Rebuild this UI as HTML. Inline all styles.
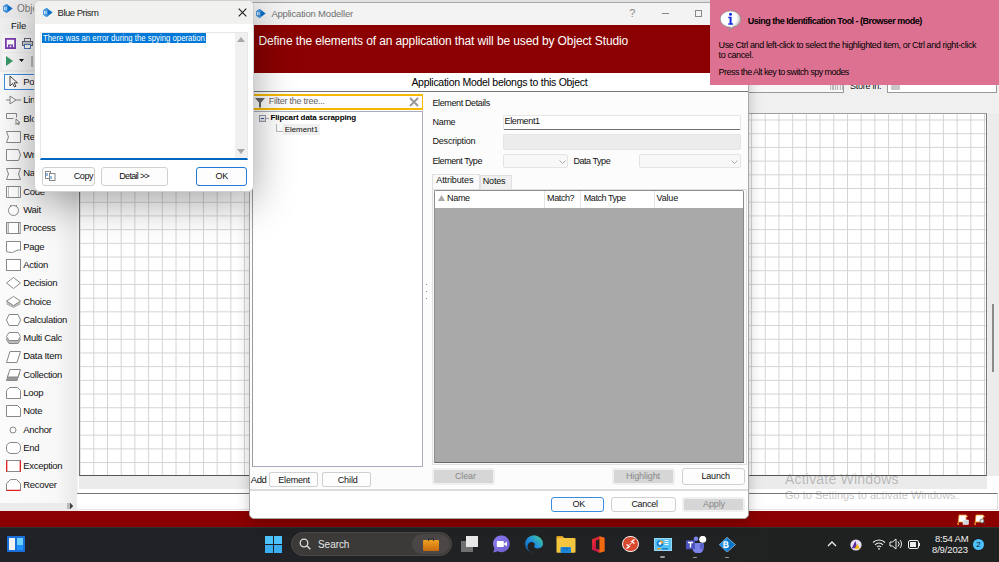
<!DOCTYPE html>
<html><head><meta charset="utf-8">
<style>
*{box-sizing:border-box;margin:0;padding:0}
html,body{width:999px;height:562px;overflow:hidden;background:#f0f0f0;font-family:"Liberation Sans",sans-serif;font-size:9px;color:#000}
.a{position:absolute;white-space:nowrap}
.grid{background-color:#fff;background-image:linear-gradient(to right,#d4d4d4 1.3px,transparent 1.3px),linear-gradient(to bottom,#d4d4d4 1.3px,transparent 1.3px);background-size:13.71px 13.71px;background-position:-0.4px 5.5px}
.sh{position:absolute;left:6px;width:15px;height:12px}
.btn{position:absolute;border:1px solid #d0d0d0;border-radius:2px;background:#fdfdfd}
</style></head><body>

<div class="a" style="left:0px;top:0px;width:999.00px;height:18.00px;background:#ececec"></div>
<div class="a" style="left:0px;top:18px;width:999.00px;height:16.00px;background:#f1f1f1"></div>
<svg class="a" style="left:3px;top:4px" width="10" height="9" viewBox="0 0 10 9"><path d="M.3 2.2L3.6 0l6.1 4.5-6.1 4.5L.3 6.8z" fill="#0b6fc9"/><path d="M.3 2.2L3.6 0l1 .7v7.6l-1 .7L.3 6.8z" fill="#4a9be2"/><path d="M1.5 3v3M3.1 3v3" stroke="#e4f1ff" stroke-width="0.9"/></svg>
<div class="a" style="left:17px;top:3.54px;font-size:10px;line-height:10px;color:#777;">Obje</div>
<div class="a" style="left:11px;top:21.46px;font-size:9.5px;line-height:9.5px;color:#111;">File</div>
<div class="a" style="left:2px;top:34px;width:31.00px;height:18.00px;background:#f8f8f8"></div>
<svg class="a" style="left:5px;top:38px" width="11" height="11" viewBox="0 0 11 11"><rect x="0.9" y="0.9" width="9.2" height="9.2" fill="#fff" stroke="#7b3fb0" stroke-width="1.8"/><rect x="3" y="6.5" width="5" height="3.6" fill="#7b3fb0"/><rect x="4.7" y="7.6" width="1.6" height="1.6" fill="#fff"/></svg>
<svg class="a" style="left:22px;top:38px" width="11" height="11" viewBox="0 0 11 11"><rect x="2.5" y="0.5" width="6" height="3" fill="none" stroke="#667"/><rect x="0.5" y="3.5" width="10" height="4" fill="#c8ccd4" stroke="#667"/><rect x="2.5" y="6.5" width="6" height="4" fill="#fff" stroke="#4a7ab8"/></svg>
<div class="a" style="left:2px;top:53px;width:31.00px;height:17.00px;background:#f8f8f8"></div>
<svg class="a" style="left:6px;top:56px" width="8" height="10" viewBox="0 0 8 10"><path d="M0 0l7 5-7 5z" fill="#3a9a6a"/></svg>
<svg class="a" style="left:19px;top:59px" width="5" height="4" viewBox="0 0 5 4"><path d="M0 0h5l-2.5 3z" fill="#111"/></svg>
<div class="a" style="left:31px;top:56px;width:2.00px;height:11.00px;background:#bbb"></div>
<div class="a" style="left:0px;top:72px;width:78.00px;height:439.00px;background:linear-gradient(to right,#fbfbfb 0,#f8f8f8 55px,#eaeaea 76px,#f4f4f4 78px)"></div>
<div class="a" style="left:4px;top:74px;width:36.00px;height:16.00px;border:1px solid #3c8ee0;background:#fff"></div>
<svg class="a" style="left:9px;top:75px" width="9" height="13" viewBox="0 0 9 13"><path d="M1 1v10l2.5-2.5 2 3.5 1.5-.8-2-3.4h3.5z" fill="#fff" stroke="#333" stroke-width=".9"/></svg>
<div class="a" style="left:23.3px;top:76.96px;font-size:9.5px;line-height:9.5px;color:#111;letter-spacing:-0.3px;">Po</div>
<svg class="a" style="left:6px;top:94.3px" width="15" height="12" viewBox="0 0 15 12"><path d="M0 6h4M10 6h5M4 2v8l6-4z" fill="none" stroke="#888"/></svg>
<div class="a" style="left:23.3px;top:95.26px;font-size:9.5px;line-height:9.5px;color:#111;letter-spacing:-0.3px;">Lin</div>
<svg class="a" style="left:6px;top:112.6px" width="15" height="12" viewBox="0 0 15 12"><path d="M.5 .5h10v4M.5 .5v5h7" fill="none" stroke="#888"/><path d="M10 6v5.5l1.3-1.3 1 2 .8-.4-1-2h2z" fill="#fff" stroke="#555" stroke-width=".7"/></svg>
<div class="a" style="left:23.3px;top:113.56px;font-size:9.5px;line-height:9.5px;color:#111;letter-spacing:-0.3px;">Blo</div>
<svg class="a" style="left:6px;top:130.9px" width="15" height="12" viewBox="0 0 15 12"><path d="M.5 .5h14v11H.5l2-5.5z" fill="#fff" stroke="#888"/></svg>
<div class="a" style="left:23.3px;top:131.86px;font-size:9.5px;line-height:9.5px;color:#111;letter-spacing:-0.3px;">Read</div>
<svg class="a" style="left:6px;top:149.2px" width="15" height="12" viewBox="0 0 15 12"><path d="M.5 .5h12l2 5.5-2 5.5H.5z" fill="#fff" stroke="#888"/></svg>
<div class="a" style="left:23.3px;top:150.16px;font-size:9.5px;line-height:9.5px;color:#111;letter-spacing:-0.3px;">Write</div>
<svg class="a" style="left:6px;top:167.5px" width="15" height="12" viewBox="0 0 15 12"><path d="M.5 .5h14l-2 5.5 2 5.5H.5l2-5.5z" fill="#fff" stroke="#888"/></svg>
<div class="a" style="left:23.3px;top:168.46px;font-size:9.5px;line-height:9.5px;color:#111;letter-spacing:-0.3px;">Navigate</div>
<svg class="a" style="left:6px;top:185.8px" width="15" height="12" viewBox="0 0 15 12"><path d="M.5 .5h14v11H.5z" fill="#fff" stroke="#888"/><path d="M2.5 .5v11M12.5 .5v11" stroke="#888" stroke-dasharray="1 1"/></svg>
<div class="a" style="left:23.3px;top:186.76px;font-size:9.5px;line-height:9.5px;color:#111;letter-spacing:-0.3px;">Code</div>
<svg class="a" style="left:6px;top:204.1px" width="15" height="12" viewBox="0 0 15 12"><circle cx="7.5" cy="6.5" r="5" fill="#fff" stroke="#888"/><path d="M4 1.2l1.5 1M11 1.2l-1.5 1" stroke="#888"/></svg>
<div class="a" style="left:23.3px;top:205.06px;font-size:9.5px;line-height:9.5px;color:#111;letter-spacing:-0.3px;">Wait</div>
<svg class="a" style="left:6px;top:222.4px" width="15" height="12" viewBox="0 0 15 12"><path d="M.5 .5h14v11H.5z M2.5 .5v11M12.5 .5v11" fill="#fff" stroke="#888"/><path d="M1 1h1.5v10H1zM13 1h1.5v10H13z" fill="#ddd"/></svg>
<div class="a" style="left:23.3px;top:223.36px;font-size:9.5px;line-height:9.5px;color:#111;letter-spacing:-0.3px;">Process</div>
<svg class="a" style="left:6px;top:240.7px" width="15" height="12" viewBox="0 0 15 12"><path d="M.5 .5h14v9c-3-2-6 2-9 2-2 0-3.5-.5-5-1z" fill="#fff" stroke="#888"/></svg>
<div class="a" style="left:23.3px;top:241.66px;font-size:9.5px;line-height:9.5px;color:#111;letter-spacing:-0.3px;">Page</div>
<svg class="a" style="left:6px;top:259.0px" width="15" height="12" viewBox="0 0 15 12"><rect x=".5" y=".5" width="14" height="11" fill="#fff" stroke="#888"/></svg>
<div class="a" style="left:23.3px;top:259.96px;font-size:9.5px;line-height:9.5px;color:#111;letter-spacing:-0.3px;">Action</div>
<svg class="a" style="left:6px;top:277.3px" width="15" height="12" viewBox="0 0 15 12"><path d="M7.5 .5l7 5.5-7 5.5L.5 6z" fill="#fff" stroke="#888"/></svg>
<div class="a" style="left:23.3px;top:278.26px;font-size:9.5px;line-height:9.5px;color:#111;letter-spacing:-0.3px;">Decision</div>
<svg class="a" style="left:6px;top:295.6px" width="15" height="12" viewBox="0 0 15 12"><path d="M.5 5.5l7 4 7-4M.5 6.7l7 4 7-4M.5 7.9l7 3.6 7-3.6" fill="none" stroke="#999" stroke-width=".8"/><path d="M7.5 .5l7 4.5-7 4.5-7-4.5z" fill="#fff" stroke="#888"/></svg>
<div class="a" style="left:23.3px;top:296.56px;font-size:9.5px;line-height:9.5px;color:#111;letter-spacing:-0.3px;">Choice</div>
<svg class="a" style="left:6px;top:313.9px" width="15" height="12" viewBox="0 0 15 12"><path d="M3 .5h9l2.5 5.5-2.5 5.5H3L.5 6z" fill="#fff" stroke="#888"/></svg>
<div class="a" style="left:23.3px;top:314.86px;font-size:9.5px;line-height:9.5px;color:#111;letter-spacing:-0.3px;">Calculation</div>
<svg class="a" style="left:6px;top:332.2px" width="15" height="12" viewBox="0 0 15 12"><path d="M3 3h9l2.5 4.5-2.5 4H3l-2.5-4z" fill="#bbb" stroke="#888"/><path d="M3 .5h9l2.5 4-2.5 4H3l-2.5-4z" fill="#fff" stroke="#888"/></svg>
<div class="a" style="left:23.3px;top:333.16px;font-size:9.5px;line-height:9.5px;color:#111;letter-spacing:-0.3px;">Multi Calc</div>
<svg class="a" style="left:6px;top:350.5px" width="15" height="12" viewBox="0 0 15 12"><path d="M4 .5h10.5l-3.5 11H.5z" fill="#fff" stroke="#888"/></svg>
<div class="a" style="left:23.3px;top:351.46px;font-size:9.5px;line-height:9.5px;color:#111;letter-spacing:-0.3px;">Data Item</div>
<svg class="a" style="left:6px;top:368.8px" width="15" height="12" viewBox="0 0 15 12"><path d="M3 4h10.5L11 11.5H.5z" fill="#999" stroke="#888"/><path d="M4 .5h10.5L12 8H1.5z" fill="#fff" stroke="#888"/></svg>
<div class="a" style="left:23.3px;top:369.76px;font-size:9.5px;line-height:9.5px;color:#111;letter-spacing:-0.3px;">Collection</div>
<svg class="a" style="left:6px;top:387.1px" width="15" height="12" viewBox="0 0 15 12"><path d="M.5 11.5v-8l3-3h8l3 3v8z" fill="#fff" stroke="#888"/></svg>
<div class="a" style="left:23.3px;top:388.06px;font-size:9.5px;line-height:9.5px;color:#111;letter-spacing:-0.3px;">Loop</div>
<svg class="a" style="left:6px;top:405.4px" width="15" height="12" viewBox="0 0 15 12"><path d="M.5 .5h11l3 3v8H.5z" fill="#fff" stroke="#888"/></svg>
<div class="a" style="left:23.3px;top:406.36px;font-size:9.5px;line-height:9.5px;color:#111;letter-spacing:-0.3px;">Note</div>
<svg class="a" style="left:6px;top:423.7px" width="15" height="12" viewBox="0 0 15 12"><circle cx="7" cy="6" r="3" fill="#fff" stroke="#888"/></svg>
<div class="a" style="left:23.3px;top:424.66px;font-size:9.5px;line-height:9.5px;color:#111;letter-spacing:-0.3px;">Anchor</div>
<svg class="a" style="left:6px;top:442.0px" width="15" height="12" viewBox="0 0 15 12"><rect x=".5" y=".5" width="14" height="11" rx="4.5" fill="#fff" stroke="#888"/></svg>
<div class="a" style="left:23.3px;top:442.96px;font-size:9.5px;line-height:9.5px;color:#111;letter-spacing:-0.3px;">End</div>
<svg class="a" style="left:6px;top:460.3px" width="15" height="12" viewBox="0 0 15 12"><rect x=".5" y=".5" width="14" height="11" fill="#fff" stroke="#888"/><path d="M.7 .5v11M14.3 .5v11" stroke="#e02020" stroke-width="1.3"/></svg>
<div class="a" style="left:23.3px;top:461.26px;font-size:9.5px;line-height:9.5px;color:#111;letter-spacing:-0.3px;">Exception</div>
<svg class="a" style="left:6px;top:478.6px" width="15" height="12" viewBox="0 0 15 12"><path d="M.5 11.5v-7l4-4h6l4 4v7z" fill="#fff" stroke="#888"/><path d="M.5 11.4h14" stroke="#e02020" stroke-width="1.3"/></svg>
<div class="a" style="left:23.3px;top:479.56px;font-size:9.5px;line-height:9.5px;color:#111;letter-spacing:-0.3px;">Recover</div>
<div class="a" style="left:0px;top:503px;width:78.00px;height:8.00px;background:#ebebeb"></div>
<svg class="a" style="left:67px;top:503px" width="8" height="6" viewBox="0 0 8 6"><path d="M1 0v6M3 0l3 3-3 3z" fill="#444" stroke="#444" stroke-width=".6"/></svg>
<div class="a grid" style="left:79px;top:113px;width:908px;height:363px;border:1px solid #777;border-top-color:#a0a0a0;border-bottom-color:#555"></div>
<div class="a" style="left:78px;top:476px;width:921.00px;height:35.00px;background:#fff"></div>
<div class="a" style="left:79px;top:476px;width:908.00px;height:13.00px;background:#ebebeb"></div>
<div class="a" style="left:988px;top:113px;width:11.00px;height:363.00px;background:#ececec"></div>
<div class="a" style="left:992px;top:304px;width:2.00px;height:68.00px;background:#8a8a8a"></div>
<div class="a" style="left:77px;top:492.5px;width:921.00px;height:17.00px;background:#fff;border-top:1px solid #777;border-right:1px solid #ddd;border-bottom:1px solid #e4e4e4"></div>
<div class="a" style="left:748px;top:76px;width:96.00px;height:17.00px;background:#f7f7f7;border:1px solid #999"></div>
<div class="a" style="left:850px;top:82.38px;font-size:9px;line-height:9px;color:#111;letter-spacing:-0.25px;">Store in:</div>
<div class="a" style="left:887px;top:76px;width:110.00px;height:17.00px;background:#fff;border:1px solid #999"></div>
<div class="a" style="left:891px;top:84.5px;width:9.00px;height:5.50px;background:#c8c8c8;border-radius:1px"></div>
<div class="a" style="left:830px;top:84.5px;width:13.00px;height:5.50px;background:repeating-linear-gradient(to right,#bbb 0 1.2px,#eee 1.2px 2.4px)"></div>
<div class="a" style="left:785px;top:471.75px;font-size:14px;line-height:14px;color:rgba(120,120,120,.45);letter-spacing:0.2px;">Activate Windows</div>
<div class="a" style="left:785px;top:489.69px;font-size:11px;line-height:11px;color:rgba(120,120,120,.45);">Go to Settings to activate Windows.</div>
<div class="a" style="left:0px;top:511px;width:999.00px;height:16.00px;background:#8b0000"></div>
<svg class="a" style="left:957px;top:514px" width="12" height="11" viewBox="0 0 12 11"><path d="M2 1h7l1.5 1.5L9 3v5H2l-1.5 1.5L2 11H1z" fill="#fff" stroke="#f39a2a" stroke-width=".8"/><rect x="6" y="6" width="5.5" height="4.5" fill="#cfd8dc" stroke="#fff" stroke-width=".5"/></svg>
<svg class="a" style="left:974px;top:514px" width="12" height="11" viewBox="0 0 12 11"><path d="M2 1h7l1.5 1.5L9 3v5H2l-1.5 1.5L2 11H1z" fill="#fff" stroke="#f39a2a" stroke-width=".8"/><circle cx="8" cy="7" r="2" fill="#dfe8ec" stroke="#555" stroke-width=".7"/><path d="M9.4 8.4l1.8 1.8" stroke="#555"/></svg>
<div class="a" style="left:0px;top:527px;width:999.00px;height:35.00px;background:linear-gradient(to right,#202227,#212224 50%,#1f2120)"></div>
<div class="a" style="left:0px;top:527px;width:999.00px;height:1.00px;background:#2c3434"></div>
<div class="a" style="left:7px;top:536px;width:18.00px;height:16.00px;background:#1a6fd8;border-radius:1px"></div>
<div class="a" style="left:9px;top:538px;width:6.00px;height:12.00px;background:#f2f2f2"></div>
<div class="a" style="left:17px;top:538px;width:6.00px;height:12.00px;background:linear-gradient(#6cd0ff 60%,#1e90ff 60%)"></div>
<div class="a" style="left:265px;top:536px;width:8.00px;height:8.00px;background:#4cc2ff"></div>
<div class="a" style="left:274px;top:536px;width:8.00px;height:8.00px;background:#4cc2ff"></div>
<div class="a" style="left:265px;top:545px;width:8.00px;height:8.00px;background:#3aaef0"></div>
<div class="a" style="left:274px;top:545px;width:8.00px;height:8.00px;background:#3aaef0"></div>
<div class="a" style="left:291px;top:532px;width:161.00px;height:24.00px;border-radius:12px;background:#3b3a39;border:1px solid #4a4948"></div>
<svg class="a" style="left:299px;top:538px" width="12" height="12" viewBox="0 0 12 12"><circle cx="5" cy="5" r="3.8" fill="none" stroke="#ddd" stroke-width="1.3"/><path d="M7.8 7.8l3.5 3.5" stroke="#ddd" stroke-width="1.4"/></svg>
<div class="a" style="left:318px;top:539.83px;font-size:10px;line-height:10px;color:#e6e6e6;letter-spacing:-0.05px;">Search</div>
<div class="a" style="left:412px;top:534px;width:38.00px;height:20.00px;border-radius:10px;background:#4a4746"></div>
<div class="a" style="left:423px;top:540px;width:16.00px;height:11.00px;background:linear-gradient(#f0a020,#c86a10);border-radius:1px"></div>
<div class="a" style="left:428px;top:538px;width:6.00px;height:3.00px;border:1px solid #333;border-bottom:none"></div>
<div class="a" style="left:461px;top:541px;width:12.00px;height:11.00px;background:#707070"></div>
<div class="a" style="left:466px;top:536px;width:12.00px;height:11.00px;background:#e8e8e8"></div>
<svg class="a" style="left:492px;top:535px" width="19" height="18" viewBox="0 0 19 18"><defs><linearGradient id="mg" x1="0" y1="0" x2="1" y2="1"><stop offset="0" stop-color="#8c7cf0"/><stop offset="1" stop-color="#6c5ccc"/></linearGradient></defs><path d="M9.5 .5a8.3 8.3 0 1 1-3.6 15.8L1.2 17.5l1.3-4A8.3 8.3 0 0 1 9.5 .5z" fill="url(#mg)"/><rect x="4.8" y="6" width="7" height="6" rx=".8" fill="#fff"/><path d="M11.5 9l3.3-2.6v5.2z" fill="#fff"/></svg>
<svg class="a" style="left:524px;top:535px" width="20" height="18" viewBox="0 0 20 18"><defs><linearGradient id="eg1" x1="0" y1="1" x2="1" y2="0"><stop offset="0" stop-color="#0c59a4"/><stop offset=".5" stop-color="#1e8fe0"/><stop offset="1" stop-color="#4ad28a"/></linearGradient></defs><path d="M10 .3a9 9 0 0 1 9 8.7c0 2.8-2.6 4.4-5.4 4.4-2 0-3.6-.8-3.6-1.6 0-.5.8-.7.8-2a3 3 0 0 0-3-2.8C5 7 3 9.5 3.6 12.8 4.4 16.5 8 18 10.8 17.6A9 9 0 0 1 1 9 9 9 0 0 1 10 .3z" fill="url(#eg1)"/></svg>
<svg class="a" style="left:556px;top:536px" width="20" height="17" viewBox="0 0 20 17"><path d="M.5 1.2Q.5 .2 1.5 .2h5l1.6 1.8h10.4q1 0 1 1V16q0 .8-.8.8H1.3q-.8 0-.8-.8z" fill="#f4c53e"/><path d="M.5 1.2Q.5 .2 1.5 .2h5l1.6 1.8H.5z" fill="#e0a020"/><rect x="4.5" y="11" width="10.5" height="6" rx="1" fill="#1a84d8"/><rect x="7" y="12.4" width="5.5" height=".9" fill="#0d5ea8"/></svg>
<svg class="a" style="left:590.5px;top:535.5px" width="14" height="17" viewBox="0 0 14 17"><defs><linearGradient id="og" x1="0" y1="0" x2="1" y2="1"><stop offset="0" stop-color="#e8352a"/><stop offset=".6" stop-color="#c0124a"/><stop offset="1" stop-color="#f06010"/></linearGradient></defs><path d="M1 3.2L8.5 .3 13.5 1.8v13.4L8.5 16.7 1 13.8z" fill="url(#og)"/><path d="M5 4.5l3.8-1.3v10.6L5 12.5z" fill="#202020"/><path d="M8.5 .3l5 1.5v13.4l-5 1.5z" fill="#f06a10"/></svg>
<div class="a" style="left:622px;top:535.7px;width:16.6px;height:16.6px;border-radius:50%;background:#d9492f;border:1.3px solid #f2f2f2"></div>
<svg class="a" style="left:625px;top:539px" width="11" height="10" viewBox="0 0 11 10"><path d="M1.5 5.5l2.8 2-2.8 2M9.5 .5l-2.8 2 2.8 2" fill="none" stroke="#fff" stroke-width="1.4"/><path d="M4.2 6.3l2.6-2.6" stroke="#fff" stroke-width="1"/></svg>
<div class="a" style="left:653.5px;top:537.5px;width:18.00px;height:13.50px;background:#55c4f5;border:1px solid #9ad8f8"></div>
<svg class="a" style="left:656px;top:539px" width="14" height="11" viewBox="0 0 14 11"><circle cx="4" cy="4.5" r="3.3" fill="#1a7fd0"/><path d="M4 4.5V1.2A3.3 3.3 0 0 1 7.3 4.5z" fill="#f0a030"/><circle cx="4" cy="4.5" r="1.4" fill="#fff"/><path d="M8.5 1.5h4M8.5 3.5h4M8.5 5.5h4" stroke="#fff" stroke-width=".9"/><rect x="1" y="9" width="4" height="1.5" fill="#f0a030"/><rect x="6" y="9" width="6" height="1.5" fill="#1a7fd0"/></svg>
<div class="a" style="left:659.8px;top:556.2px;width:5.40px;height:1.60px;background:#9a9a9a;border-radius:1px"></div>
<svg class="a" style="left:685px;top:535.5px" width="22" height="17" viewBox="0 0 22 17"><circle cx="11" cy="2.8" r="2.3" fill="#7b83eb"/><path d="M5.5 7h12a1 1 0 0 1 1 1v4.5a5.5 5 0 0 1-11 0V8z" fill="#7b83eb"/><path d="M15 7.5h4v4a2 2 0 0 1-4 0z" fill="#5a62c8"/><rect x=".9" y="4.2" width="9.1" height="9.1" rx=".8" fill="#4b53bc"/><path d="M3 6.5h5M5.5 6.5v5" stroke="#fff" stroke-width="1.4"/><circle cx="17.7" cy="3.3" r="3.5" fill="#fff"/></svg>
<div class="a" style="left:692.5px;top:556.5px;width:4.50px;height:1.50px;background:#9a9a9a;border-radius:1px"></div>
<svg class="a" style="left:718.5px;top:536.5px" width="17" height="15.5" viewBox="0 0 17 15.5"><path d="M8 .3l8.5 7.4L8 15.2 .3 7.7z" fill="#0b76c8" stroke="#e8eef4" stroke-width=".5"/><path d="M4.2 4L8 .3v14.9L.3 7.7z" fill="#2a92e0"/><path d="M4.5 4.3h3.2q1.8 0 1.8 1.6 0 1-.9 1.4 1.3.3 1.3 1.7 0 1.9-2.2 1.9H4.5z" fill="#fff"/><path d="M5.8 5.4h1.6q.8 0 .8.7t-.8.7H5.8zM5.8 7.8h1.8q.9 0 .9.8t-.9.8H5.8z" fill="#2a92e0"/></svg>
<div class="a" style="left:724.8px;top:556.5px;width:4.50px;height:1.50px;background:#9a9a9a;border-radius:1px"></div>
<svg class="a" style="left:827px;top:541px" width="10" height="6" viewBox="0 0 10 6"><path d="M1 5l4-4 4 4" fill="none" stroke="#eee" stroke-width="1.3"/></svg>
<svg class="a" style="left:849.5px;top:538.5px" width="12" height="12" viewBox="0 0 12 12"><circle cx="6" cy="6" r="5.6" fill="#e8e0f0"/><path d="M5.5 1.8L1.8 9.2h5.4z" fill="#5a2ca0"/><path d="M7.3 5.2l-2.8 4.6h5.6z" fill="#f4b400"/></svg>
<svg class="a" style="left:872px;top:538px" width="14" height="12" viewBox="0 0 14 12"><path d="M1 4.5a8.5 8.5 0 0 1 12 0M3 6.8a5.5 5.5 0 0 1 8 0M5 9a2.5 2.5 0 0 1 4 0" fill="none" stroke="#eee" stroke-width="1.1"/><circle cx="7" cy="10.8" r=".9" fill="#eee"/></svg>
<svg class="a" style="left:889px;top:538px" width="14" height="12" viewBox="0 0 14 12"><path d="M1 4h2.5L7 1v10L3.5 8H1z" fill="none" stroke="#eee" stroke-width="1"/><path d="M9 3.5a3.5 3.5 0 0 1 0 5M11 2a6 6 0 0 1 0 8" fill="none" stroke="#eee" stroke-width="1"/></svg>
<svg class="a" style="left:908px;top:539.5px" width="12" height="9" viewBox="0 0 12 9"><rect x=".5" y=".5" width="10" height="8" rx="1.5" fill="none" stroke="#eee"/><rect x="2" y="2" width="6" height="5" fill="#eee"/><rect x="10.8" y="3" width="1.2" height="3" fill="#eee"/></svg>
<div class="a" style="left:935px;top:533.96px;font-size:9.5px;line-height:9.5px;color:#f0f0f0;letter-spacing:-0.2px;">8:54 AM</div>
<div class="a" style="left:932px;top:544.96px;font-size:9.5px;line-height:9.5px;color:#f0f0f0;letter-spacing:-0.15px;">8/9/2023</div>
<div class="a" style="left:973px;top:539px;width:11px;height:11px;border-radius:50%;background:#4cc2ff;color:#111;font-size:8px;line-height:11px;text-align:center">2</div>
<div class="a" style="left:249px;top:2px;width:500px;height:517px;background:#fcfcfc;border:1px solid #a8a8a8;border-radius:0 0 5px 5px;box-shadow:0 4px 14px rgba(0,0,0,.22)"></div>
<div class="a" style="left:250px;top:3px;width:498.00px;height:21.50px;background:#f3f3f3"></div>
<svg class="a" style="left:256px;top:9px" width="10" height="9" viewBox="0 0 10 9"><path d="M.3 2.2L3.6 0l6.1 4.5-6.1 4.5L.3 6.8z" fill="#0b6fc9"/><path d="M.3 2.2L3.6 0l1 .7v7.6l-1 .7L.3 6.8z" fill="#4a9be2"/><path d="M1.5 3v3M3.1 3v3" stroke="#e4f1ff" stroke-width="0.9"/></svg>
<div class="a" style="left:271.4px;top:9.26px;font-size:9.5px;line-height:9.5px;color:#707070;letter-spacing:-0.2px;">Application Modeller</div>
<div class="a" style="left:629.3px;top:8.29px;font-size:11px;line-height:11px;color:#888;">?</div>
<div class="a" style="left:662px;top:13px;width:7.00px;height:1.00px;background:#888"></div>
<div class="a" style="left:695px;top:9.7px;width:7.00px;height:7.00px;border:1px solid #888"></div>
<div class="a" style="left:254px;top:24.5px;width:494.00px;height:48.80px;background:#8b0000"></div>
<div class="a" style="left:258.5px;top:34.64px;font-size:12px;line-height:12px;color:#fff;letter-spacing:-0.12px;">Define the elements of an application that will be used by Object Studio</div>
<div class="a" style="left:254px;top:73.3px;width:494.00px;height:17.70px;background:#fff"></div>
<div class="a" style="left:254px;top:91px;width:494.00px;height:1.00px;background:#777"></div>
<div class="a" style="left:411.4px;top:77.41px;font-size:10.5px;line-height:10.5px;color:#000;letter-spacing:-0.27px;">Application Model belongs to this Object</div>
<div class="a" style="left:254px;top:94px;width:169.00px;height:16.00px;background:#fdfdfd;border-top:2px solid #f5b800;border-bottom:2px solid #f5b800;border-right:1.5px solid #f5b800"></div>
<svg class="a" style="left:255px;top:97.5px" width="10" height="10" viewBox="0 0 10 10"><path d="M0 0h10L6 4.5V9.5H4V4.5z" fill="#666"/></svg>
<div class="a" style="left:268.8px;top:97.08px;font-size:9px;line-height:9px;color:#666;letter-spacing:-0.25px;">Filter the tree...</div>
<svg class="a" style="left:409px;top:97px" width="10" height="10" viewBox="0 0 10 10"><path d="M1 1l8 8M9 1l-8 8" stroke="#999" stroke-width="2"/></svg>
<div class="a" style="left:251.5px;top:110.5px;width:171.50px;height:356.00px;background:#fff;border:1px solid #a8aec0;border-left:1.5px solid #9a9a9a"></div>
<div class="a" style="left:259px;top:115px;width:7.00px;height:7.00px;border:1px solid #99a;background:linear-gradient(#fff,#ddd)"></div>
<div class="a" style="left:261px;top:118px;width:3.00px;height:1.00px;background:#3355aa"></div>
<div class="a" style="left:266px;top:118px;width:3.00px;height:1.00px;background:#aaa"></div>
<div class="a" style="left:270.4px;top:113.93px;font-size:8px;line-height:8px;color:#000;font-weight:bold;letter-spacing:-0.1px;">Flipcart data scrapping</div>
<div class="a" style="left:276px;top:124px;width:1.00px;height:7.00px;background:#bbb"></div>
<div class="a" style="left:276px;top:131px;width:7.00px;height:1.00px;background:#bbb"></div>
<div class="a" style="left:283px;top:124px;width:37.00px;height:11.00px;background:#f0f0f0"></div>
<div class="a" style="left:284.7px;top:125.63px;font-size:8px;line-height:8px;color:#111;letter-spacing:-0.05px;">Element1</div>
<div class="a" style="left:250.8px;top:475.46px;font-size:9.5px;line-height:9.5px;color:#111;letter-spacing:-0.4px;">Add</div>
<div class="a" style="left:268.5px;top:472.4px;width:49.10px;height:15.00px;border:1px solid #d0d0d0;border-radius:2px;background:#fdfdfd"></div>
<div class="a" style="left:278.3px;top:475.58px;font-size:9px;line-height:9px;color:#111;letter-spacing:-0.2px;">Element</div>
<div class="a" style="left:322px;top:472.4px;width:49.00px;height:15.00px;border:1px solid #d0d0d0;border-radius:2px;background:#fdfdfd"></div>
<div class="a" style="left:337.7px;top:475.58px;font-size:9px;line-height:9px;color:#111;letter-spacing:-0.1px;">Child</div>
<div class="a" style="left:426px;top:284px;width:1.00px;height:1.00px;background:#888;box-shadow:0 7px #888,0 14px #888"></div>
<div class="a" style="left:432.5px;top:98.98px;font-size:9px;line-height:9px;color:#111;letter-spacing:-0.38px;">Element Details</div>
<div class="a" style="left:432.5px;top:117.58px;font-size:9px;line-height:9px;color:#111;letter-spacing:-0.3px;">Name</div>
<div class="a" style="left:502.7px;top:114.6px;width:238.30px;height:15.40px;background:#fff;border:1px solid #e6e6e6;border-bottom:1.5px solid #707070;border-radius:2px"></div>
<div class="a" style="left:504.5px;top:117.08px;font-size:9px;line-height:9px;color:#111;letter-spacing:-0.35px;">Element1</div>
<div class="a" style="left:432.5px;top:137.48px;font-size:9px;line-height:9px;color:#111;letter-spacing:-0.2px;">Description</div>
<div class="a" style="left:502.7px;top:134.2px;width:238.30px;height:15.50px;background:#ececec;border:1px solid #e4e4e4;border-radius:2px"></div>
<div class="a" style="left:432.5px;top:157.08px;font-size:9px;line-height:9px;color:#111;letter-spacing:-0.45px;">Element Type</div>
<div class="a" style="left:502.7px;top:153.9px;width:65.60px;height:14.60px;background:#f8f8f8;border:1px solid #e4e4e4;border-radius:2px"></div>
<svg class="a" style="left:559px;top:160px" width="7" height="4" viewBox="0 0 7 4"><path d="M.5 .5l3 3 3-3" fill="none" stroke="#aaa"/></svg>
<div class="a" style="left:573.4px;top:157.18px;font-size:9px;line-height:9px;color:#111;letter-spacing:-0.45px;">Data Type</div>
<div class="a" style="left:639.3px;top:153.9px;width:101.70px;height:14.60px;background:#f8f8f8;border:1px solid #e4e4e4;border-radius:2px"></div>
<svg class="a" style="left:731px;top:160px" width="7" height="4" viewBox="0 0 7 4"><path d="M.5 .5l3 3 3-3" fill="none" stroke="#aaa"/></svg>
<div class="a" style="left:479.5px;top:175.4px;width:32.50px;height:14.60px;background:#f0f0f0;border:1px solid #e0e0e0;border-bottom:none"></div>
<div class="a" style="left:431.5px;top:173.6px;width:48.00px;height:16.40px;background:#fafafa;border:1px solid #e0e0e0;border-bottom:none"></div>
<div class="a" style="left:436.3px;top:176.08px;font-size:9px;line-height:9px;color:#111;letter-spacing:-0.1px;">Attributes</div>
<div class="a" style="left:482.7px;top:177.38px;font-size:9px;line-height:9px;color:#111;letter-spacing:-0.15px;">Notes</div>
<div class="a" style="left:431.5px;top:189px;width:315.50px;height:275.50px;background:#fafafa;border:1px solid #e0e0e0"></div>
<div class="a" style="left:433.5px;top:189.5px;width:310.50px;height:273.00px;background:#a9a9a9;border:1.5px solid #8e8e8e;border-right:1px solid #8a8a8a;border-bottom-color:#6a6a6a;border-radius:2px 2px 0 0"></div>
<div class="a" style="left:435px;top:191px;width:308.00px;height:17.00px;background:#fff"></div>
<svg class="a" style="left:438px;top:195.2px" width="7" height="6" viewBox="0 0 7 6"><path d="M0 6l3.5-6 3.5 6z" fill="#a8a8a8"/></svg>
<div class="a" style="left:447px;top:193.88px;font-size:9px;line-height:9px;color:#111;letter-spacing:-0.3px;">Name</div>
<div class="a" style="left:543.5px;top:191px;width:1.00px;height:17.00px;background:#e4e4e4"></div>
<div class="a" style="left:547.1px;top:193.88px;font-size:9px;line-height:9px;color:#111;letter-spacing:-0.4px;">Match?</div>
<div class="a" style="left:580.3px;top:191px;width:1.00px;height:17.00px;background:#e4e4e4"></div>
<div class="a" style="left:583.8px;top:193.88px;font-size:9px;line-height:9px;color:#111;letter-spacing:-0.45px;">Match Type</div>
<div class="a" style="left:653.6px;top:191px;width:1.00px;height:17.00px;background:#e4e4e4"></div>
<div class="a" style="left:656.6px;top:193.88px;font-size:9px;line-height:9px;color:#111;letter-spacing:-0.2px;">Value</div>
<div class="a" style="left:431.7px;top:467.8px;width:63.50px;height:17.50px;background:#d6d6d6;border:2px solid #f0f0f0;border-radius:3px"></div>
<div class="a" style="left:454.9px;top:472.18px;font-size:9px;line-height:9px;color:#888;letter-spacing:-0.1px;">Clear</div>
<div class="a" style="left:611.6px;top:467.8px;width:63.90px;height:17.50px;background:#d6d6d6;border:2px solid #f0f0f0;border-radius:3px"></div>
<div class="a" style="left:625.9px;top:472.28px;font-size:9px;line-height:9px;color:#888;letter-spacing:-0.1px;">Highlight</div>
<div class="a" style="left:681.6px;top:467.8px;width:63.90px;height:17.50px;background:#fdfdfd;border:1px solid #d0d0d0;border-radius:3px"></div>
<div class="a" style="left:701.5px;top:472.28px;font-size:9px;line-height:9px;color:#111;letter-spacing:-0.2px;">Launch</div>
<div class="a" style="left:250px;top:489px;width:498.00px;height:2.00px;background:#dcdcdc"></div>
<div class="a" style="left:250px;top:491px;width:498.00px;height:27.00px;background:#fff;border-radius:0 0 5px 5px"></div>
<div class="a" style="left:550.6px;top:496.8px;width:53.30px;height:15.00px;background:#fdfdfd;border:1px solid #3a8ee0;border-radius:3px"></div>
<div class="a" style="left:572.4px;top:499.88px;font-size:9px;line-height:9px;color:#111;letter-spacing:-0.1px;">OK</div>
<div class="a" style="left:611px;top:496.8px;width:64.50px;height:15.00px;background:#fdfdfd;border:1px solid #d0d0d0;border-radius:3px"></div>
<div class="a" style="left:631.4px;top:499.88px;font-size:9px;line-height:9px;color:#111;letter-spacing:-0.3px;">Cancel</div>
<div class="a" style="left:681.6px;top:496.8px;width:63.90px;height:15.00px;background:#d6d6d6;border:2px solid #f0f0f0;border-radius:3px"></div>
<div class="a" style="left:703px;top:499.88px;font-size:9px;line-height:9px;color:#888;letter-spacing:-0.1px;">Apply</div>
<div class="a" style="left:34px;top:0;width:220px;height:191.5px;background:#fff;border:1px solid #d0d0d0;border-radius:6px;overflow:hidden;box-shadow:0 10px 40px rgba(0,0,0,.36)"></div>
<div class="a" style="left:35px;top:1px;width:218.00px;height:23.00px;background:#f1f1ef;border-radius:5px 5px 0 0"></div>
<svg class="a" style="left:42.8px;top:7.7px" width="10" height="9" viewBox="0 0 10 9"><path d="M.3 2.2L3.6 0l6.1 4.5-6.1 4.5L.3 6.8z" fill="#0b6fc9"/><path d="M.3 2.2L3.6 0l1 .7v7.6l-1 .7L.3 6.8z" fill="#4a9be2"/><path d="M1.5 3v3M3.1 3v3" stroke="#e4f1ff" stroke-width="0.9"/></svg>
<div class="a" style="left:57.6px;top:7.96px;font-size:9.5px;line-height:9.5px;color:#222;letter-spacing:-0.5px;">Blue Prism</div>
<svg class="a" style="left:238px;top:7.5px" width="9" height="9" viewBox="0 0 9 9"><path d="M.7 .7l7.6 7.6M8.3 .7L.7 8.3" stroke="#222" stroke-width="1.15"/></svg>
<div class="a" style="left:40px;top:31.5px;width:207.60px;height:128.00px;background:#fff;border:1px solid #e8e8e8;border-bottom:2px solid #0067c0"></div>
<div class="a" style="left:235px;top:32.5px;width:11.60px;height:125.00px;background:#f0f0f0"></div>
<svg class="a" style="left:237px;top:36px" width="8" height="6" viewBox="0 0 8 6"><path d="M0 6l4-5 4 5z" fill="#a8a8a8"/></svg>
<svg class="a" style="left:237px;top:149px" width="8" height="6" viewBox="0 0 8 6"><path d="M0 0l4 5 4-5z" fill="#a8a8a8"/></svg>
<div class="a" style="left:42.2px;top:33px;width:163.60px;height:9.80px;background:#0078d7"></div>
<div class="a" style="left:43.4px;top:33.2px;color:#fff;font-size:9.5px;line-height:9.5px;transform:scaleX(0.82);transform-origin:0 0">There was an error during the spying operation.</div>
<div class="a" style="left:42px;top:167.3px;width:52.50px;height:18.40px;border:1px solid #d0d0d0;border-radius:3px;background:#fdfdfd"></div>
<svg class="a" style="left:45px;top:171px" width="11" height="10" viewBox="0 0 11 10"><rect x=".5" y=".5" width="5" height="7" fill="#fff" stroke="#888"/><rect x="4.5" y="2.5" width="5.5" height="7" fill="#fff" stroke="#888"/><path d="M2 2v3M6 5v3" stroke="#2a7ad0"/></svg>
<div class="a" style="left:73.7px;top:172.28px;font-size:9px;line-height:9px;color:#111;letter-spacing:-0.4px;">Copy</div>
<div class="a" style="left:101.4px;top:167.3px;width:66.60px;height:18.40px;border:1px solid #d0d0d0;border-radius:3px;background:#fdfdfd"></div>
<div class="a" style="left:119.3px;top:172.28px;font-size:9px;line-height:9px;color:#111;letter-spacing:-0.7px;">Detail &gt;&gt;</div>
<div class="a" style="left:196.2px;top:167.3px;width:50.80px;height:18.40px;border:1px solid #1f7ad8;border-radius:3px;background:#fdfdfd"></div>
<div class="a" style="left:215.4px;top:172.28px;font-size:9px;line-height:9px;color:#111;letter-spacing:-0.2px;">OK</div>
<div class="a" style="left:710px;top:0px;width:289.00px;height:84.50px;background:#dd7191"></div>
<svg class="a" style="left:719px;top:9.5px" width="23" height="21" viewBox="0 0 23 21"><defs><radialGradient id="ig" cx=".4" cy=".35" r=".7"><stop offset=".55" stop-color="#fff"/><stop offset="1" stop-color="#9a9a9a"/></radialGradient></defs><path d="M11.5 .8a10.5 8.3 0 1 0 .3 16.6l-2.2 3.4 4.6-3.7A10.5 8.3 0 0 0 11.5 .8z" fill="url(#ig)" stroke="#8a8a8a" stroke-width=".8"/><circle cx="11.5" cy="4.3" r="1.5" fill="#1428e0"/><path d="M9.3 6.8h3.3v6.5h1.4v1.4H9.3v-1.4h1.3V8.2H9.3z" fill="#1428e0"/></svg>
<div class="a" style="left:747.8px;top:16.58px;font-size:9px;line-height:9px;color:#000;font-weight:bold;letter-spacing:-0.5px;">Using the Identification Tool - (Browser mode)</div>
<div class="a" style="left:718.6px;top:41.08px;font-size:9px;line-height:9px;color:#000;letter-spacing:-0.4px;">Use Ctrl and left-click to select the highlighted item, or Ctrl and right-click</div>
<div class="a" style="left:718.6px;top:50.58px;font-size:9px;line-height:9px;color:#000;letter-spacing:-0.4px;">to cancel.</div>
<div class="a" style="left:718.6px;top:67.98px;font-size:9px;line-height:9px;color:#000;letter-spacing:-0.55px;">Press the Alt key to switch spy modes</div>
</body></html>
